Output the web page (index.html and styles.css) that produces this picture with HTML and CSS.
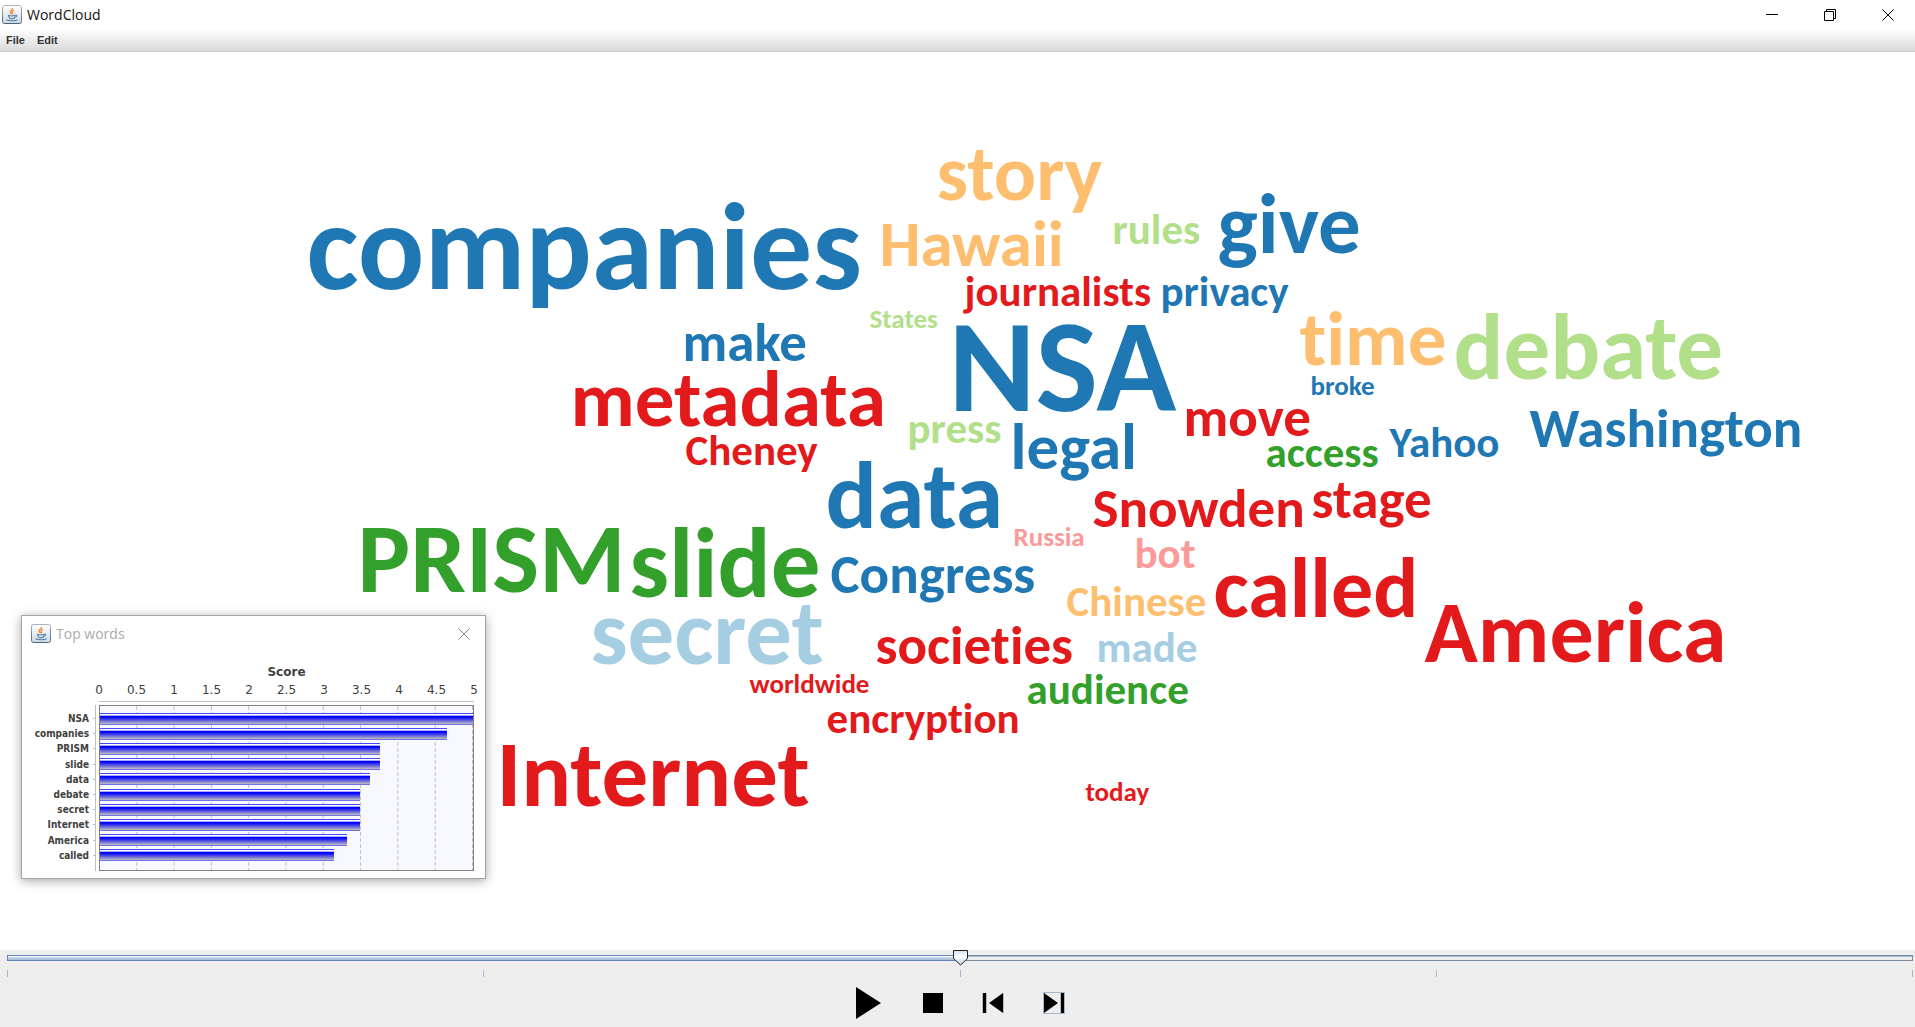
FILE: index.html
```html
<!DOCTYPE html>
<html lang="en">
<head>
<meta charset="utf-8">
<title>WordCloud</title>
<link rel="stylesheet" href="styles.css">
</head>
<body>
<svg class="defs" aria-hidden="true">
  <defs>
    <linearGradient id="tile" x1="0" y1="0" x2="0" y2="1">
      <stop offset="0" stop-color="#ffffff"/><stop offset="1" stop-color="#cfd9e2"/>
    </linearGradient>
    <linearGradient id="edge" x1="0" y1="0" x2="0" y2="1">
      <stop offset="0" stop-color="#a9b4be"/><stop offset="1" stop-color="#48657f"/>
    </linearGradient>
    <symbol id="java" viewBox="0 0 20 20">
      <rect x="0.5" y="0.5" width="19" height="18" rx="2" fill="url(#tile)" stroke="url(#edge)"/>
      <path d="M10.6 3c.6 1.600-2.400 2.300-2.400 3.900 0 1 .9 1.600 1.200 2.300M12 5.300c-1.300.4-2 1-2 1.800 0 .9 1 1 .4 2.200" fill="none" stroke="#ee8222" stroke-width="1.200"/>
      <path d="M6 10.300c1.800.7 5.300.7 7.200 0M6.600 10.500c.2 2 .6 2.600 1.400 2.900 1.200.4 2.900.3 3.900 0 .6-.3.900-1 1.100-2M13.200 10.300c1.600-.5 2.100.9.200 1.900M4.500 14.800c2.500 1.300 8.500 1.300 11-.1" fill="none" stroke="#4f7fa3" stroke-width="1.100"/>
    </symbol>
  </defs>
</svg>

<header class="titlebar">
  <svg class="app-icon" aria-hidden="true"><use href="#java"/></svg>
  <h1 class="title">WordCloud</h1>
  <div class="window-buttons">
    <button type="button" aria-label="Minimize"><svg viewBox="0 0 12 12"><path d="M0 5.500h12"/></svg></button>
    <button type="button" aria-label="Restore"><svg viewBox="0 0 12 12"><path d="M.5 2.500h9v9h-9zM2.500 2.500v-2h9v9h-2"/></svg></button>
    <button type="button" aria-label="Close"><svg viewBox="0 0 12 12"><path d="M.5.5l11 11M11.500.5l-11 11"/></svg></button>
  </div>
</header>

<nav class="menubar">
  <button type="button">File</button>
  <button type="button">Edit</button>
</nav>

<main class="canvas">
  <div class="cloud">
    <span class="blue" style="--x:-651px;--y:133px;--s:124px">companies</span>
    <span class="orange" style="--x:-21px;--y:82px;--s:79px">story</span>
    <span class="orange" style="--x:-78px;--y:159px;--s:65px">Hawaii</span>
    <span class="red" style="--x:7px;--y:218px;--s:43px">journalists</span>
    <span class="lime" style="--x:-88px;--y:253px;--s:27px">States</span>
    <span class="blue" style="--x:-275px;--y:263px;--s:55px">make</span>
    <span class="red" style="--x:-387px;--y:308px;--s:79px">metadata</span>
    <span class="red" style="--x:-272px;--y:377px;--s:43px">Cheney</span>
    <span class="lime" style="--x:-50px;--y:355px;--s:43px">press</span>
    <span class="blue" style="--x:-9px;--y:248px;--s:132px">NSA</span>
    <span class="blue" style="--x:53px;--y:362px;--s:65px">legal</span>
    <span class="blue" style="--x:-132px;--y:396px;--s:96px">data</span>
    <span class="lime" style="--x:155px;--y:156px;--s:43px">rules</span>
    <span class="blue" style="--x:260px;--y:130px;--s:85px">give</span>
    <span class="blue" style="--x:203px;--y:218px;--s:43px">privacy</span>
    <span class="orange" style="--x:342px;--y:249px;--s:77px">time</span>
    <span class="lime" style="--x:496px;--y:249px;--s:93px">debate</span>
    <span class="blue" style="--x:353px;--y:320px;--s:27px">broke</span>
    <span class="red" style="--x:226px;--y:338px;--s:55px">move</span>
    <span class="green" style="--x:308px;--y:379px;--s:43px">access</span>
    <span class="blue" style="--x:432px;--y:369px;--s:43px">Yahoo</span>
    <span class="blue" style="--x:572px;--y:349px;--s:55px">Washington</span>
    <span class="red" style="--x:135px;--y:429px;--s:55px">Snowden</span>
    <span class="red" style="--x:354px;--y:420px;--s:55px">stage</span>
    <span class="pink" style="--x:177px;--y:480px;--s:43px">bot</span>
    <span class="green" style="--x:-600px;--y:457px;--s:99px">PRISM</span>
    <span class="green" style="--x:-328px;--y:462px;--s:99px">slide</span>
    <span class="blue" style="--x:-127px;--y:495px;--s:55px">Congress</span>
    <span class="sky" style="--x:-367px;--y:534px;--s:93px">secret</span>
    <span class="red" style="--x:-82px;--y:566px;--s:55px">societies</span>
    <span class="red" style="--x:-208px;--y:618px;--s:27px">worldwide</span>
    <span class="green" style="--x:69px;--y:616px;--s:43px">audience</span>
    <span class="red" style="--x:-131px;--y:645px;--s:43px">encryption</span>
    <span class="red" style="--x:-461px;--y:676px;--s:93px">Internet</span>
    <span class="pink" style="--x:56px;--y:471px;--s:27px">Russia</span>
    <span class="orange" style="--x:109px;--y:528px;--s:43px">Chinese</span>
    <span class="red" style="--x:256px;--y:495px;--s:84px">called</span>
    <span class="red" style="--x:467px;--y:536px;--s:88px">America</span>
    <span class="sky" style="--x:139px;--y:574px;--s:43px">made</span>
    <span class="red" style="--x:128px;--y:726px;--s:27px">today</span>
  </div>

  <section class="dialog" aria-labelledby="dialog-title">
    <header class="dialog-head">
      <svg class="app-icon" aria-hidden="true"><use href="#java"/></svg>
      <h2 class="title" id="dialog-title">Top words</h2>
      <button type="button" aria-label="Close"><svg viewBox="0 0 12 12"><path d="M.5.5l11 11M11.500.5l-11 11"/></svg></button>
    </header>
    <div class="chart">
      <div class="scale">
        <h3>Score</h3>
        <div class="scale-values">
          <span>0</span><span>0.5</span><span>1</span><span>1.5</span><span>2</span><span>2.5</span><span>3</span><span>3.5</span><span>4</span><span>4.5</span><span>5</span>
        </div>
      </div>
      <ol class="names">
        <li>NSA</li><li>companies</li><li>PRISM</li><li>slide</li><li>data</li><li>debate</li><li>secret</li><li>Internet</li><li>America</li><li>called</li>
      </ol>
      <div class="plot">
        <i style="width:100%"></i>
        <i style="width:93%"></i>
        <i style="width:75%"></i>
        <i style="width:75%"></i>
        <i style="width:72.4%"></i>
        <i style="width:69.6%"></i>
        <i style="width:69.6%"></i>
        <i style="width:69.6%"></i>
        <i style="width:66.3%"></i>
        <i style="width:62.7%"></i>
      </div>
    </div>
  </section>
</main>

<footer class="player">
  <div class="timeline">
    <input type="range" min="0" max="100" value="50" aria-label="Position">
    <div class="ticks"><i></i><i></i><i></i><i></i><i></i></div>
  </div>
  <div class="controls">
    <button type="button" aria-label="Play"><svg width="28" height="32"><path d="M0 0L25 16L0 32z"/></svg></button>
    <button type="button" aria-label="Stop"><svg width="20" height="20"><path d="M0 0h20v20H0z"/></svg></button>
    <button type="button" aria-label="Previous"><svg width="22" height="20"><path d="M1 0h3v20H1zM21 0v20L7 10z"/><path class="soft" d="M0 0h1v20H0zM4 0h1v20H4zM21 0h1v20h-1z"/></svg></button>
    <button type="button" class="focused" aria-label="Next"><svg width="20" height="20"><path d="M0 0l14 10L0 20zM17 0h3v20h-3z"/><path class="soft" d="M16 0h1v20h-1z"/></svg></button>
  </div>
</footer>
</body>
</html>
```
FILE: styles.css
```css
* {
  box-sizing: border-box;
}

body {
  display: flex;
  flex-direction: column;
  min-height: 100vh;
  margin: 0;
  background: #fff;
  font-family: "Segoe UI", "Open Sans", "Noto Sans", sans-serif;
}

h1, h2, h3, ol {
  margin: 0;
  padding: 0;
  list-style: none;
}

button {
  display: block;
  padding: 0;
  border: 0;
  background: none;
  color: inherit;
}

button svg {
  display: block;
}

.defs {
  position: absolute;
  width: 0;
  height: 0;
}

.app-icon {
  flex: none;
  width: 20px;
  height: 20px;
}

.title {
  font-size: 14px;
  line-height: 20px;
  font-weight: 400;
}

/* Window frame */

.titlebar {
  display: flex;
  align-items: center;
  gap: 5px;
  height: 29px;
  padding: 0 21px 0 2px;
}

.titlebar .title {
  color: #111;
}

.window-buttons {
  display: flex;
  gap: 46px;
  margin-left: auto;
}

.window-buttons svg,
.dialog-head button svg {
  width: 12px;
  height: 12px;
  fill: none;
  stroke: #000;
}

.menubar {
  display: flex;
  gap: 12px;
  height: 23px;
  padding: 0 6px;
  border-bottom: 1px solid #ccc;
  background: linear-gradient(#fff, #dadada);
}

.menubar button {
  font: bold 11px/22px "Liberation Sans", Arial, sans-serif;
  color: #333;
}

/* Word cloud */

.canvas {
  position: relative;
  flex: 1;
  min-height: 840px;
  overflow: hidden;
}

.cloud span {
  position: absolute;
  left: calc(50% + var(--x));
  top: var(--y);
  font: bold var(--s)/1 Calibri, Carlito, Lato, sans-serif;
  font-variant-ligatures: none;
  white-space: nowrap;
}

.blue { color: #1f78b4; }
.sky { color: #a6cee3; }
.green { color: #33a02c; }
.lime { color: #b2df8a; }
.red { color: #e31a1c; }
.pink { color: #fb9a99; }
.orange { color: #fdbf6f; }

/* Floating chart window */

.dialog {
  position: absolute;
  left: 21px;
  top: 563px;
  width: 465px;
  padding-bottom: 7px;
  border: 1px solid #a4a4a4;
  background: #fff;
  box-shadow: 0 2px 10px rgba(0, 0, 0, 0.35);
}

.dialog-head {
  display: flex;
  align-items: center;
  gap: 5px;
  padding: 8px 15px 19px 9px;
}

.dialog-head .title {
  color: #aaa;
}

.dialog-head button {
  margin-left: auto;
}

.dialog-head button svg {
  stroke: #888;
}

.chart {
  display: grid;
  grid-template-columns: 74px 1fr;
  column-gap: 3px;
  padding-right: 11px;
  color: #404040;
}

.scale {
  grid-column: 2;
  margin-bottom: 3px;
  padding-bottom: 2px;
  border-bottom: 1px solid #c0c0c0;
  font: 12px/18px "DejaVu Sans", Verdana, sans-serif;
}

.scale h3 {
  font-size: 12px;
  line-height: 18px;
  text-align: center;
}

.scale-values {
  display: flex;
  justify-content: space-between;
}

.scale-values span {
  display: flex;
  justify-content: center;
  width: 0;
}

.names {
  display: grid;
  grid-template-rows: repeat(10, 1fr);
  height: 166px;
  padding: 6px 0 8px;
  border-right: 1px solid #c0c0c0;
  font: bold 10px/15px "DejaVu Sans Condensed", Tahoma, sans-serif;
  text-align: right;
}

.names li {
  padding-right: 6px;
  background: linear-gradient(#c0c0c0, #c0c0c0) right center / 2px 1px no-repeat;
}

.plot {
  display: grid;
  grid-template-rows: repeat(10, 1fr);
  align-items: center;
  height: 166px;
  padding: 5px 0 7px;
  border: 1px solid #808080;
  background:
    repeating-linear-gradient(transparent 0 4px, #f8f8ff 4px 6px),
    linear-gradient(to left, #c0c0c0 1px, transparent 1px) 0 0 / 10% 100%,
    #f8f8ff;
}

.plot i {
  height: 12px;
  background: linear-gradient(#4848ff 1px, #fff 1px 2px, #a8a8ff 2px 3px, #00f 3px 4px, #c0c0c0 11px, #7272e4 11px);
}

/* Playback panel */

.player {
  height: 77px;
  background: #eee;
}

.timeline {
  padding: 0 2px 0 7px;
}

.timeline input {
  display: block;
  appearance: none;
  width: 100%;
  height: 16px;
  margin: 0;
  background: none;
}

.timeline input::-webkit-slider-runnable-track {
  height: 6px;
  border-left: 1px solid #6382bf;
  border-right: 1px solid #7a8a99;
  background:
    linear-gradient(#6382bf 1px, #fff 1px 2px, #c8dcea 2px, #a3b8d8 5px, #6382bf 5px) 0 0 / 50% 100% no-repeat,
    linear-gradient(#7a8a99 1px, #a3bcd2 1px 2px, #eee 2px 5px, #7a8a99 5px);
}

.timeline input::-webkit-slider-thumb {
  appearance: none;
  width: 15px;
  height: 16px;
  margin-top: -5px;
  background: url("data:image/svg+xml,%3Csvg xmlns='http://www.w3.org/2000/svg' width='15' height='16'%3E%3ClinearGradient id='g' x2='0' y2='1'%3E%3Cstop stop-color='%23c8ddf2'/%3E%3Cstop offset='.4' stop-color='%23fff'/%3E%3Cstop offset='1' stop-color='%23b8cfe5'/%3E%3C/linearGradient%3E%3Cpath d='M.5.5h14v8l-7 6.500l-7-6.500z' fill='url(%23g)' stroke='%23222'/%3E%3C/svg%3E");
}

.ticks {
  display: flex;
  justify-content: space-between;
  height: 7px;
  margin-top: 4px;
}

.ticks i {
  width: 1px;
  background: #a3b8d2;
}

.controls {
  display: flex;
  justify-content: center;
  align-items: center;
  gap: 39px;
  padding: 10px 0 0 6px;
}

.controls .soft {
  fill: #bbb;
}

.controls .focused {
  border: 1px solid #a3b8cc;
}
```
